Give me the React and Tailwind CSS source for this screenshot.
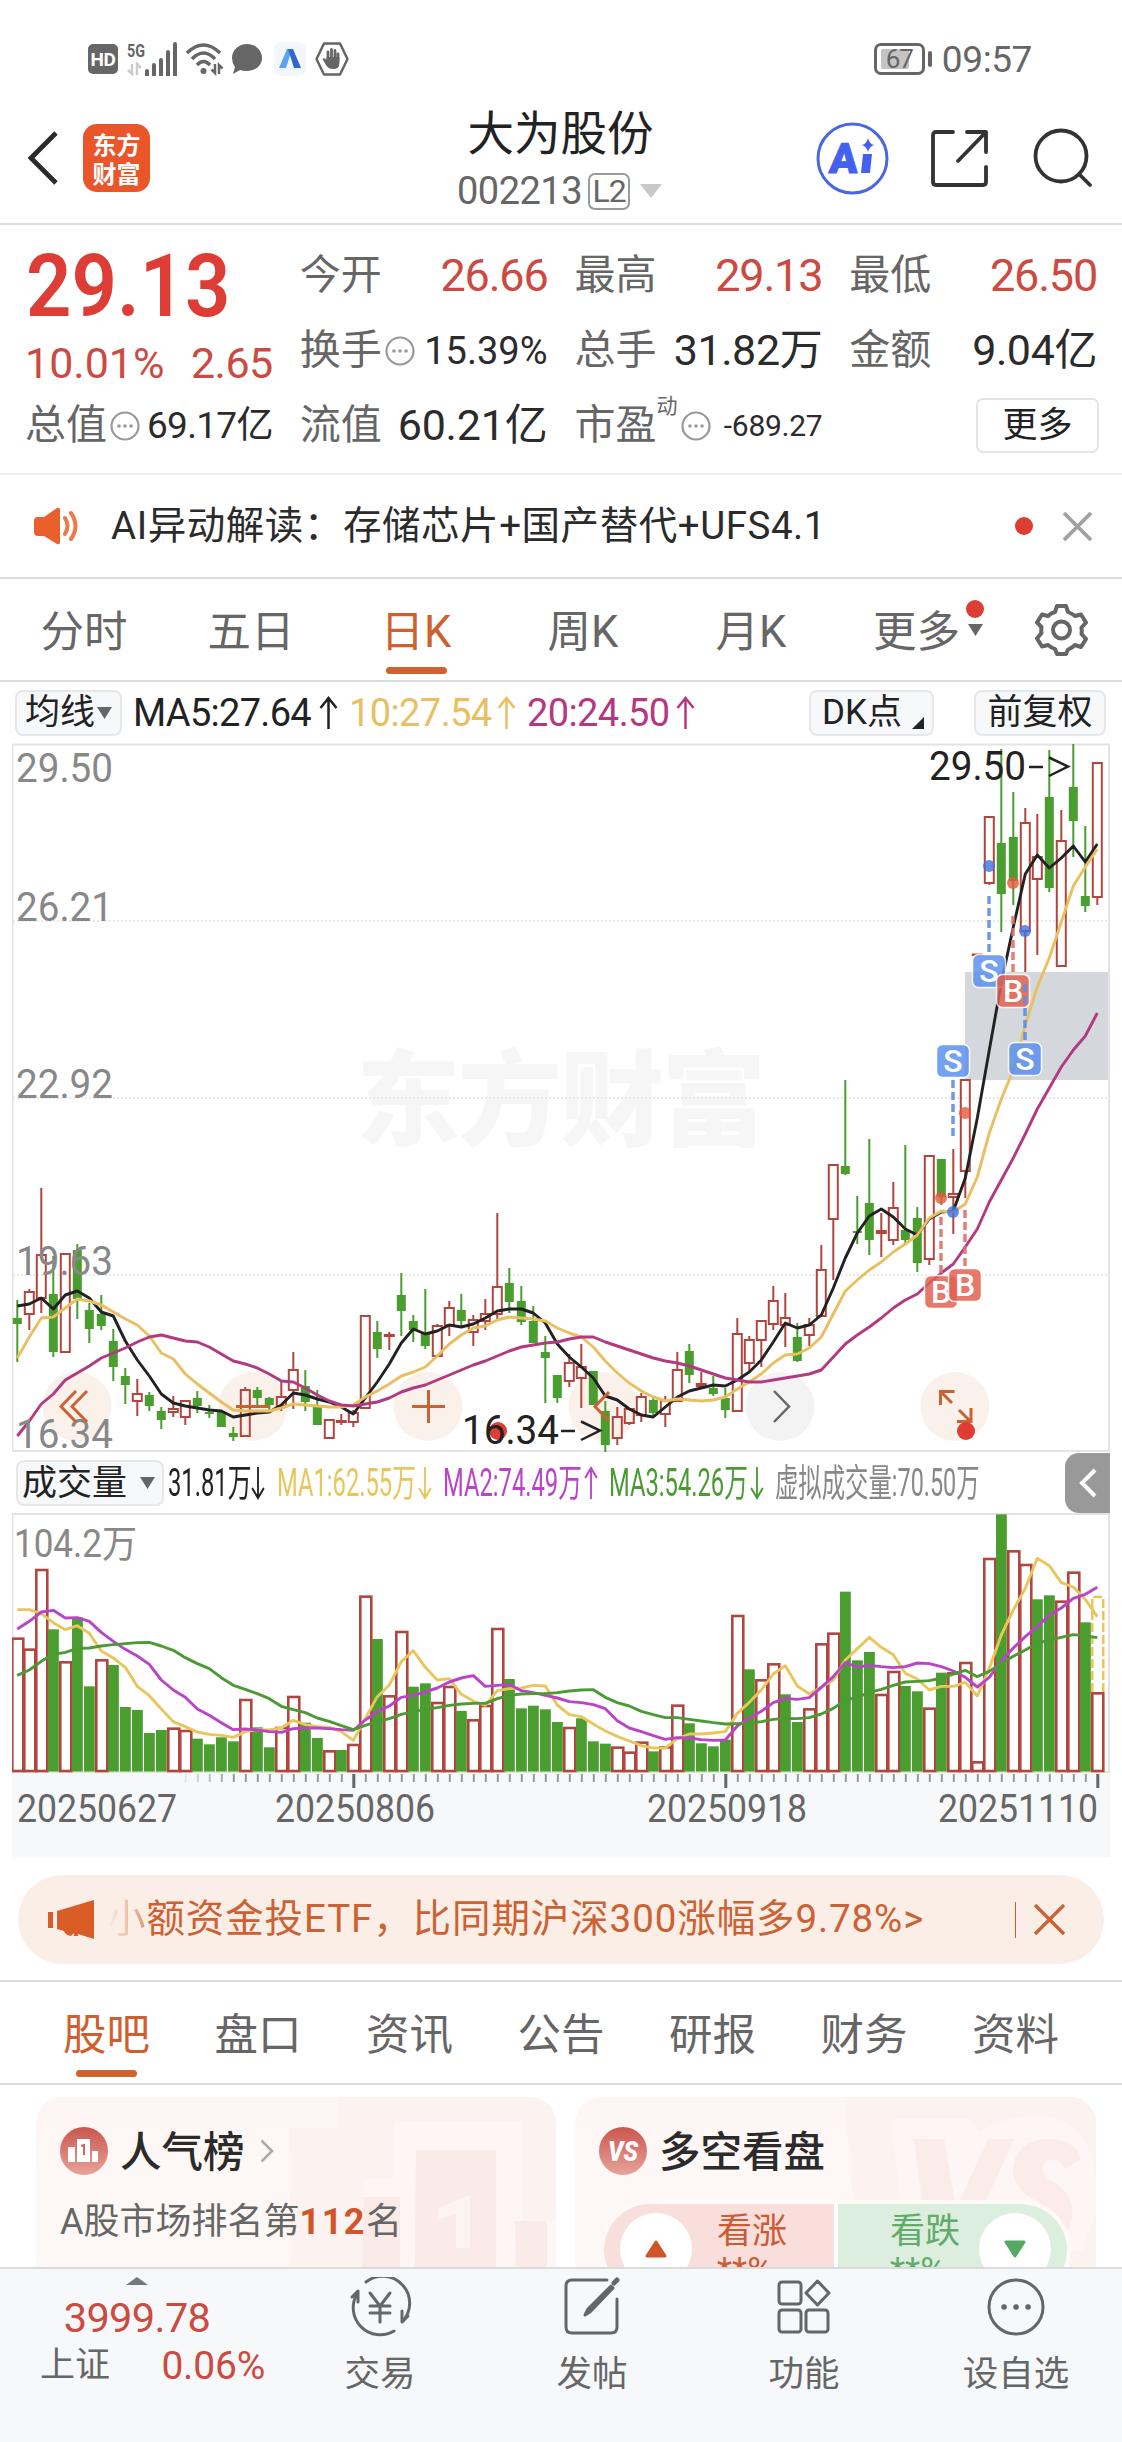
import React from 'react';
import clsx from 'clsx';

const RED = '#b1463f';
const GREEN = '#4a9e2f';
const STEP = 12;
const xAt = (i) => 17.3 + i * STEP;

// [color, high, body top, body bottom, low], all as y on the chart canvas
const candles = [
  ['g', 1300, 1318, 1324, 1362], ['r', 1289, 1292, 1314, 1330], ['r', 1188, 1255, 1298, 1313], ['g', 1256, 1294, 1352, 1357],
  ['r', 1254, 1254, 1352, 1352], ['g', 1244, 1250, 1299, 1319], ['g', 1303, 1310, 1329, 1343], ['g', 1295, 1314, 1326, 1330],
  ['g', 1329, 1341, 1367, 1381], ['g', 1368, 1376, 1385, 1404], ['r', 1379, 1394, 1401, 1416], ['g', 1392, 1395, 1406, 1411],
  ['g', 1407, 1411, 1420, 1429], ['r', 1396, 1409, 1412, 1417], ['r', 1401, 1401, 1417, 1425], ['g', 1391, 1398, 1406, 1413],
  ['g', 1405, 1412, 1414, 1418], ['g', 1412, 1412, 1427, 1427], ['g', 1427, 1433, 1437, 1441], ['r', 1387, 1390, 1436, 1437],
  ['g', 1387, 1390, 1398, 1408], ['g', 1397, 1398, 1405, 1410], ['r', 1382, 1397, 1406, 1411], ['r', 1352, 1370, 1390, 1409],
  ['g', 1370, 1386, 1402, 1411], ['g', 1390, 1407, 1425, 1425], ['r', 1420, 1420, 1438, 1439], ['r', 1414, 1421, 1422, 1425],
  ['r', 1410, 1413, 1422, 1427], ['r', 1316, 1316, 1408, 1408], ['g', 1321, 1332, 1349, 1358], ['r', 1332, 1335, 1336, 1350],
  ['g', 1273, 1295, 1311, 1336], ['g', 1315, 1321, 1330, 1342], ['g', 1289, 1333, 1346, 1349], ['r', 1324, 1326, 1356, 1356],
  ['r', 1301, 1308, 1325, 1336], ['g', 1294, 1310, 1321, 1327], ['r', 1315, 1320, 1332, 1346], ['r', 1299, 1314, 1321, 1330],
  ['r', 1213, 1287, 1314, 1320], ['g', 1268, 1283, 1302, 1313], ['g', 1286, 1301, 1322, 1325], ['g', 1306, 1321, 1343, 1343],
  ['g', 1336, 1352, 1358, 1403], ['g', 1375, 1375, 1398, 1403], ['r', 1354, 1363, 1381, 1387], ['r', 1344, 1367, 1378, 1408],
  ['g', 1371, 1371, 1405, 1405], ['g', 1401, 1411, 1445, 1452], ['r', 1407, 1417, 1438, 1445], ['r', 1409, 1409, 1423, 1425],
  ['r', 1393, 1397, 1415, 1422], ['g', 1398, 1400, 1413, 1417], ['r', 1396, 1401, 1414, 1427], ['r', 1352, 1370, 1401, 1401],
  ['g', 1344, 1351, 1375, 1383], ['r', 1372, 1384, 1386, 1388], ['g', 1376, 1388, 1394, 1396], ['g', 1388, 1398, 1410, 1418],
  ['r', 1318, 1334, 1411, 1411], ['r', 1336, 1340, 1363, 1371], ['r', 1321, 1321, 1340, 1367], ['r', 1286, 1301, 1324, 1330],
  ['r', 1293, 1318, 1325, 1347], ['g', 1323, 1337, 1361, 1362], ['r', 1318, 1325, 1335, 1346], ['r', 1245, 1270, 1316, 1316],
  ['r', 1165, 1165, 1219, 1280], ['g', 1080, 1166, 1174, 1175], ['g', 1196, 1231, 1233, 1244], ['g', 1139, 1203, 1240, 1255],
  ['r', 1213, 1231, 1233, 1257], ['r', 1182, 1208, 1240, 1245], ['g', 1145, 1230, 1240, 1244], ['g', 1207, 1218, 1263, 1272],
  ['r', 1156, 1156, 1259, 1265], ['g', 1159, 1159, 1197, 1205], ['r', 1149, 1194, 1197, 1234], ['r', 1080, 1080, 1171, 1198],
  ['r', 955, 954.5, 955, 955], ['r', 817, 817, 883, 885], ['g', 749, 843, 894, 932], ['g', 792, 837, 881, 905],
  ['r', 808, 823, 931, 972], ['r', 814, 857, 879, 955], ['g', 750, 797, 888, 892], ['r', 810, 841, 966, 966],
  ['g', 744, 787, 821, 857], ['g', 826, 896, 906, 912], ['r', 763, 763, 897, 905],
];

const ma5 = [
  1306, 1304, 1298, 1309, 1295, 1291, 1298, 1312, 1316, 1341, 1360, 1376, 1394, 1403, 1406, 1408, 1410, 1411, 1417, 1415,
  1413, 1412, 1405, 1393, 1395, 1399, 1402, 1407, 1414, 1398, 1382, 1364, 1343, 1329, 1334, 1331, 1325, 1327, 1324, 1318,
  1311, 1309, 1309, 1313, 1323, 1344, 1357, 1367, 1378, 1396, 1400, 1409, 1415, 1417, 1407, 1397, 1391, 1388, 1385, 1386,
  1380, 1372, 1360, 1342, 1323, 1328, 1325, 1315, 1288, 1258, 1233, 1216, 1209, 1217, 1229, 1235, 1219, 1212, 1211, 1178,
  1118, 1050, 983, 927, 874, 855, 868, 858, 846, 862, 844,
];

const ma10 = [
  1358, 1337, 1318, 1317, 1308, 1299, 1301, 1305, 1312, 1319, 1325, 1336, 1353, 1359, 1374, 1384, 1393, 1402, 1410, 1411,
  1411, 1411, 1408, 1404, 1405, 1406, 1407, 1407, 1405, 1397, 1391, 1384, 1376, 1372, 1367, 1356, 1344, 1335, 1328, 1326,
  1320, 1317, 1318, 1319, 1321, 1328, 1333, 1337, 1347, 1361, 1373, 1383, 1391, 1397, 1401, 1399, 1400, 1401, 1400, 1397,
  1389, 1382, 1374, 1363, 1355, 1354, 1348, 1337, 1314, 1291, 1280, 1270, 1262, 1252, 1244, 1235, 1218, 1211, 1212, 1204,
  1177, 1133, 1099, 1070, 1025, 987, 958, 922, 886, 867, 849,
];

const ma20 = [
  1436, 1421, 1404, 1394, 1380, 1373, 1366, 1358, 1353, 1348, 1342, 1337, 1335, 1338, 1341, 1342, 1347, 1354, 1361, 1364,
  1368, 1374, 1381, 1382, 1388, 1395, 1401, 1405, 1406, 1404, 1402, 1398, 1392, 1388, 1385, 1380, 1375, 1370, 1365, 1361,
  1356, 1351, 1347, 1345, 1343, 1342, 1339, 1337, 1337, 1342, 1346, 1350, 1354, 1358, 1361, 1363, 1366, 1370, 1374, 1378,
  1380, 1382, 1382, 1380, 1378, 1376, 1374, 1370, 1357, 1344, 1335, 1327, 1318, 1308, 1300, 1294, 1283, 1273, 1264, 1247,
  1229, 1202, 1180, 1158, 1134, 1109, 1088, 1067, 1050, 1036, 1013,
];

// Volume panel values are in thirds of a pixel below the panel top
const volY = (v) => 1450 + v / 3;

const volumes = [
  566, 599, 360, 538, 637, 502, 709, 631, 645, 771, 780, 849, 840, 836, 843, 866, 883, 862, 874, 750,
  832, 892, 834, 741, 818, 864, 904, 900, 885, 440, 567, 739, 546, 710, 700, 759, 711, 783, 811, 768,
  537, 687, 775, 767, 778, 816, 834, 805, 874, 881, 893, 908, 878, 904, 892, 767, 820, 880, 889, 869,
  498, 658, 691, 643, 733, 816, 778, 583, 551, 425, 631, 606, 735, 666, 708, 724, 776, 668, 670, 639,
  937, 327, 193, 304, 345, 448, 436, 455, 368, 517, 730,
];
const volumeColors =
  'rrrgrggrgg' + 'gggrrggggr' + 'ggrrggrgrr' + 'grrggrrgrr' + 'rgggggrggg' + 'rrrgrrgggg' + 'rgrrggrrrg' + 'ggrrggrgrr' + 'rrgrrggrrg' + 'r';

const volMa1 = [
  479, 479, 491, 518, 539, 527, 550, 603, 624, 652, 709, 737, 777, 815, 830, 846, 853, 856, 862, 845,
  839, 840, 834, 811, 824, 830, 832, 845, 871, 805, 740, 705, 635, 602, 652, 690, 686, 733, 753, 766,
  722, 716, 714, 706, 708, 765, 794, 800, 822, 843, 859, 873, 887, 894, 894, 866, 852, 852, 849, 845,
  790, 757, 720, 672, 647, 708, 732, 712, 690, 630, 596, 562, 592, 614, 670, 687, 720, 709, 709, 697,
  738, 655, 555, 480, 415, 325, 347, 398, 411, 448, 500,
];
const volMa2 = [
  537, 514, 486, 481, 504, 503, 514, 547, 574, 598, 618, 643, 690, 720, 742, 777, 796, 818, 839, 837,
  840, 845, 847, 836, 834, 834, 836, 839, 841, 810, 785, 768, 742, 736, 726, 714, 696, 684, 677, 709,
  706, 703, 722, 728, 736, 744, 755, 758, 764, 776, 812, 834, 845, 857, 868, 863, 864, 869, 871, 870,
  828, 805, 784, 758, 745, 748, 743, 712, 680, 638, 651, 646, 650, 653, 650, 639, 641, 650, 663, 682,
  711, 682, 633, 594, 560, 530, 495, 474, 445, 433, 412,
];
const volMa3 = [
  676, 660, 634, 613, 607, 595, 594, 588, 584, 581, 578, 577, 588, 601, 623, 641, 656, 683, 706, 718,
  731, 746, 769, 779, 788, 804, 814, 827, 839, 826, 815, 806, 793, 785, 778, 773, 766, 762, 760, 760,
  746, 736, 732, 731, 731, 728, 723, 720, 719, 742, 758, 768, 784, 794, 803, 803, 808, 813, 818, 822,
  821, 820, 815, 808, 805, 806, 803, 792, 775, 750, 742, 727, 718, 706, 696, 694, 692, 684, 672, 661,
  680, 664, 640, 619, 600, 580, 570, 562, 554, 558, 563,
];

const toPoints = (values, y = (v) => v) => values.map((v, i) => `${xAt(i)},${y(v)}`).join(' ');

const Line = ({ values, color, y }) => (
  <polyline points={toPoints(values, y)} fill="none" stroke={color} strokeWidth="2.9" strokeLinejoin="round" />
);

// ---------- Status bar ----------

const StatusBar = () => (
  <div className="flex h-[88px] shrink-0 items-center pt-[30px] pr-[90px] pl-[88px] text-[#666]">
    <div className="flex h-[30px] w-[30px] items-center justify-center rounded-[5px] bg-[#666] text-[19px] leading-none font-bold tracking-[-0.5px] text-white">
      HD
    </div>
    <svg className="ml-[9px]" width="51" height="34" viewBox="0 0 51 34">
      <text x="0" y="15" fontSize="18" fontWeight="700" textLength="18" lengthAdjust="spacingAndGlyphs" fill="#666">5G</text>
      <path d="M5 22v10l-4-4M10 33V22l4 4" fill="none" stroke="#ccc" strokeWidth="2.5" />
      <path d="M20 33v-4M27 33v-10M34 33v-15M41 33V10M48 33V2" stroke="#666" strokeWidth="4" strokeLinecap="round" />
    </svg>
    <svg className="ml-[8px]" width="38" height="34" viewBox="0 0 38 34">
      <g fill="none" stroke="#666" strokeWidth="3.5">
        <path d="M1 11Q17.500 -5 34 11" />
        <path d="M6 17Q17.500 5 29 17" />
        <path d="M11 23Q17.500 16 24 23" />
      </g>
      <circle cx="17.500" cy="29" r="3" fill="#666" />
      <path d="M29 22v9l-3.500-3.500M33 32v-9l3.500 3.500" fill="none" stroke="#666" strokeWidth="2.500" />
    </svg>
    <svg className="ml-[7px]" width="32" height="32" viewBox="0 0 32 32">
      <path d="M16 1C24 1 31 7 31 15S24 28 16 28Q12 28 9 27L2 31L4 24Q1 20 1 15C1 7 8 1 16 1Z" fill="#666" />
    </svg>
    <div className="ml-[11px] flex h-[34px] w-[32px] items-center justify-center rounded-[7px] bg-[#f2f7fe]">
      <svg width="24" height="20" viewBox="0 0 24 20">
        <path d="M9 0h5L8 19H1Z" fill="#5aa5ee" />
        <path d="M10 0h5l8 19h-7Z" fill="#2f66cf" />
      </svg>
    </div>
    <svg className="ml-[9px]" width="34" height="34" viewBox="0 0 34 34">
      <path d="M9 1.500h16L32.500 17L25 32.500H9L1.500 17Z" fill="none" stroke="#666" strokeWidth="2.500" strokeLinejoin="round" />
      <path d="M13 19V10M16.500 18V7.500M20 18V8.500M23 19v-7" stroke="#666" strokeWidth="2.800" strokeLinecap="round" />
      <path d="M11.600 15h12.800v6q0 6-6 6t-8-5l-3-5q2-2 4 1Z" fill="#666" />
    </svg>
    <div className="ml-auto flex items-center">
      <div className="relative flex h-[32px] w-[51px] items-center justify-center rounded-[7px] border-[3px] border-[#666] text-[26px] leading-none">
        <div className="absolute top-[3px] left-[4px] h-[20px] w-[28px] rounded-[2px] bg-[#c4c4c4]" />
        <span className="relative tracking-[-1px]">67</span>
      </div>
      <div className="ml-[3px] h-[16px] w-[4px] rounded bg-[#666]" />
      <span className="ml-[10px] text-[37px] leading-none tracking-[-0.4px]">09:57</span>
    </div>
  </div>
);

// ---------- Header ----------

const Header = () => (
  <div className="grid h-[137px] shrink-0 grid-cols-[1fr_auto_1fr] border-b-2 border-[#dcdcdc]">
    <div className="flex items-center pt-[5px] pl-[27px]">
      <svg width="31" height="54" viewBox="0 0 31 54">
        <path d="M29 2L4 27l25 25" fill="none" stroke="#2b2b2b" strokeWidth="4.800" />
      </svg>
      <div className="ml-[25px] flex h-[68px] w-[67px] flex-col items-center justify-center rounded-[14px] bg-[#ea5529] font-['Noto_Sans_CJK_SC',sans-serif] text-[24px] leading-[29px] font-bold text-white">
        <span>东方</span>
        <span>财富</span>
      </div>
    </div>
    <div className="flex flex-col items-center pt-[23px]">
      <h1 className="-ml-[1px] text-[46.500px] leading-[46px] text-[#222]">大为股份</h1>
      <div className="mt-[15px] -ml-[3px] flex h-[38px] items-center text-[#666]">
        <span className="text-[38px] leading-none tracking-[-0.500px]">002213</span>
        <span className="ml-[6px] flex h-[37px] w-[42px] items-center justify-center rounded-[7px] border-2 border-[#999] text-[32px] leading-none tracking-[-1px]">
          L2
        </span>
        <svg className="ml-[10px]" width="22" height="14" viewBox="0 0 22 14">
          <path d="M0 0h22L11 14Z" fill="#c8c8c8" />
        </svg>
      </div>
    </div>
    <div className="flex items-center justify-end pt-[5px] pr-[29px]">
      <svg width="73" height="73" viewBox="0 0 73 73">
        <circle cx="36.500" cy="36.500" r="34.500" fill="#fff" stroke="#4a67e2" strokeWidth="3" />
        <text x="13" y="51" fontSize="42" fontWeight="900" fill="#4361ee" stroke="#4361ee" strokeWidth="1" transform="skewX(-4) translate(3 0)">A</text>
        <path d="M47 32h9l-2 19h-9Z" fill="#4361ee" />
        <path d="M52 16q1.500 6 6 7q-4.500 1.500-6 7q-1.500-5.500-6-7q4.500-1 6-7Z" fill="#4361ee" />
      </svg>
      <svg className="ml-[41px]" width="59" height="59" viewBox="0 0 59 59">
        <g fill="none" stroke="#333" strokeWidth="3.800" strokeLinecap="round" strokeLinejoin="round">
          <path d="M23 3H6q-3 0-3 3v47q0 3 3 3h47q3 0 3-3V38" />
          <path d="M37 3h19v20M56 3L28 32" />
        </g>
      </svg>
      <svg className="ml-[44px]" width="60" height="60" viewBox="0 0 60 60">
        <circle cx="28" cy="28" r="25.500" fill="none" stroke="#333" strokeWidth="3.800" />
        <path d="M46 46l11 11" stroke="#333" strokeWidth="3.800" strokeLinecap="round" />
      </svg>
    </div>
  </div>
);

// ---------- Quote ----------

const InfoDots = () => (
  <svg className="ml-[3px] shrink-0" width="30" height="30" viewBox="0 0 30 30">
    <circle cx="15" cy="15" r="13.500" fill="none" stroke="#999" strokeWidth="2.200" />
    <circle cx="9" cy="15" r="1.800" fill="#999" />
    <circle cx="15" cy="15" r="1.800" fill="#999" />
    <circle cx="21" cy="15" r="1.800" fill="#999" />
  </svg>
);

const Quote = ({ label, value, info, sup, valueClass }) => (
  <div className="flex h-[75px] items-center whitespace-nowrap">
    <span className="text-[41px] leading-none text-[#666]">{label}</span>
    {sup && <span className="self-start pt-[8px] text-[21px] leading-none text-[#666]">{sup}</span>}
    {info && <InfoDots />}
    <span className={clsx('ml-auto leading-none', valueClass)}>{value}</span>
  </div>
);

const QuotePanel = () => (
  <div className="grid h-[250px] shrink-0 grid-cols-4 content-start gap-x-[27px] border-b-2 border-[#eee] pt-[13px] pr-[25px] pl-[25px]">
    <div className="row-span-2 h-[150px] text-[#cb4a41]">
      <div className="ml-[1px] w-max origin-left scale-x-[0.905] pt-[4px] text-[88px] leading-[88px] font-semibold text-[#dd3d35]">29.13</div>
      <div className="mt-[12px] flex justify-between text-[43px] leading-[43px]">
        <span className="tracking-[0px]">10.01%</span>
        <span className="tracking-[-0.500px]">2.65</span>
      </div>
    </div>
    <Quote label="今开" value="26.66" valueClass="text-[45px] tracking-[-1.200px] text-[#cb4a41]" />
    <Quote label="最高" value="29.13" valueClass="text-[45px] tracking-[-1.200px] text-[#cb4a41]" />
    <Quote label="最低" value="26.50" valueClass="text-[45px] tracking-[-1.200px] text-[#cb4a41]" />
    <Quote label="换手" value="15.39%" info valueClass="text-[38px] tracking-[0px] text-[#2b2b2b]" />
    <Quote label="总手" value="31.82万" valueClass="text-[43px] tracking-[-0.400px] text-[#2b2b2b]" />
    <Quote label="金额" value="9.04亿" valueClass="text-[43px] tracking-[-0.400px] text-[#2b2b2b]" />
    <Quote label="总值" value="69.17亿" info valueClass="text-[37px] tracking-[-0.700px] text-[#2b2b2b]" />
    <Quote label="流值" value="60.21亿" valueClass="text-[43px] tracking-[-0.200px] text-[#2b2b2b]" />
    <Quote label="市盈" sup="动" value="-689.27" info valueClass="text-[30px] tracking-[-0.300px] text-[#2b2b2b]" />
    <div className="flex h-[75px] items-center justify-end">
      <button className="-mr-[2px] h-[55px] w-[123px] rounded-[7px] border-2 border-[#e4e4e4] text-[35px] leading-none text-[#222]">更多</button>
    </div>
  </div>
);

const AiNotice = () => (
  <div className="flex h-[104px] shrink-0 items-center border-b-2 border-[#dcdcdc] pr-[29px] pl-[34px]">
    <svg width="46" height="38" viewBox="0 0 46 38">
      <path d="M4 10h6L23 1q3-1 3 2v32q0 3-3 2L10 29H4q-4 0-4-4V14q0-4 4-4Z" fill="#e9602c" />
      <path d="M31 11q5 8 0 16M37 6q9 13 0 26" fill="none" stroke="#ec7a4c" strokeWidth="4" strokeLinecap="round" />
    </svg>
    <span className="ml-[31px] text-[38.500px] leading-none tracking-[0.550px] text-[#2b2b2b]">AI异动解读：存储芯片+国产替代+UFS4.1</span>
    <div className="ml-auto h-[18px] w-[18px] rounded-full bg-[#dd3d35]" />
    <svg className="ml-[29px]" width="31" height="31" viewBox="0 0 31 31">
      <path d="M2 2l27 27M29 2L2 29" stroke="#a0a0a0" strokeWidth="3.800" />
    </svg>
  </div>
);

const periods = ['分时', '五日', '日K', '周K', '月K'];
const periodWidths = ['w-[86px] mr-[81px]', 'w-[86px] mr-[90px]', 'w-[64px] mr-[100px]', 'w-[70px] mr-[98px]', 'w-[70px]'];

const PeriodTabs = () => (
  <div className="flex h-[103px] shrink-0 items-center border-b-2 border-[#dcdcdc] pr-[34px] pl-[41px] text-[43.500px] leading-none whitespace-nowrap text-[#666]">
    {periods.map((name, i) => (
      <div key={name} className={clsx('flex h-full flex-col items-center pt-[32px]', periodWidths[i], name === '日K' && 'text-[#cf5f2e]')}>
        <span>{name}</span>
        {name === '日K' && <div className="mt-[12px] h-[7px] w-[61px] shrink-0 rounded-full bg-[#d0622f]" />}
      </div>
    ))}
    <div className="ml-auto flex h-full items-start pt-[21px]">
      <span className="pt-[11px]">更多</span>
      <div className="ml-[6px] flex flex-col items-center">
        <div className="h-[18px] w-[18px] rounded-full bg-[#dd3d35]" />
        <svg className="mt-[6px]" width="15" height="12" viewBox="0 0 15 12">
          <path d="M0 0h15L7.500 12Z" fill="#666" />
        </svg>
      </div>
    </div>
    <svg className="ml-[51px]" width="53" height="53" viewBox="0 0 53 53">
      <g fill="none" stroke="#666" strokeWidth="4" strokeLinejoin="round">
        <path d="M22 3h9l2 6q4 1.500 7 4l6-1.500l5 8l-4.500 5q.500 4 0 6.500l4.500 5l-5 8L40 42q-3 3-7 4.500L31 51h-9l-2-5q-4-1.500-7-4l-6 1.500l-5-8L6.500 30q-.500-3 0-6L2 19.500l5-8L13 13q3-3 7-4Z" />
        <circle cx="26.500" cy="27" r="8.500" />
      </g>
    </svg>
  </div>
);

// ---------- Price chart ----------

const Arrow = ({ down, className }) => (
  <svg className={className} width="19" height="34" viewBox="0 0 19 34" preserveAspectRatio="none">
    <path
      d={down ? 'M9.500 1v31M1.500 22l8 10l8-10' : 'M9.500 33V2M1.500 12l8-10l8 10'}
      fill="none"
      stroke="currentColor"
      strokeWidth="2.500"
    />
  </svg>
);

const chipClass = 'flex h-[46px] items-center rounded-[8px] border-2 border-[#e6e7ea] bg-[#f7f8fa] text-[35px] leading-none text-[#222]';

const MaLegend = () => (
  <div className="flex h-[61px] shrink-0 items-center pr-[16px] pl-[15px] text-[38px] leading-none whitespace-nowrap text-[#222]">
    <div className={clsx(chipClass, 'w-[107px] pl-[8px]')}>
      均线
      <svg className="ml-[2px]" width="15" height="12" viewBox="0 0 15 12">
        <path d="M0 0h15L7.500 12Z" fill="#666" />
      </svg>
    </div>
    <span className="ml-[11px] w-[184px] tracking-[-0.700px]">MA5:27.64</span>
    <Arrow className="ml-[2px]" />
    <span className="ml-[11px] w-[146px] tracking-[-0.600px] text-[#e9bf62]">10:27.54</span>
    <Arrow className="ml-[2px] text-[#e9bf62]" />
    <span className="ml-[11px] w-[147px] tracking-[-0.600px] text-[#b63680]">20:24.50</span>
    <Arrow className="ml-[2px] text-[#b63680]" />
    <div className={clsx(chipClass, 'ml-auto w-[125px] pl-[11px]')}>
      DK点
      <svg className="mt-[20px] ml-[10px]" width="12" height="12" viewBox="0 0 12 12">
        <path d="M12 0v12H0Z" fill="#222" />
      </svg>
    </div>
    <div className={clsx(chipClass, 'ml-[40px] w-[132px] justify-center')}>前复权</div>
  </div>
);

const Candle = ({ index, data }) => {
  const [color, high, top, bottom, low] = data;
  const x = xAt(index);
  if (color === 'g') {
    return (
      <g fill={GREEN}>
        <rect x={x - 1} y={high} width="2" height={low - high} />
        <rect x={x - 4.5} y={top} width="9" height={Math.max(bottom - top, 2)} />
      </g>
    );
  }
  return (
    <g stroke={RED} strokeWidth="2">
      <path d={`M${x} ${high}V${top}M${x} ${bottom}V${low}`} />
      <rect x={x - 4.5} y={top} width="9" height={bottom - top} fill="none" />
    </g>
  );
};

const markers = [
  { type: 'S', x: 953, y: 1061, dot: 1212, from: 1080, to: 1138 },
  { type: 'S', x: 989, y: 971, dot: 866, from: 896, to: 954 },
  { type: 'B', x: 1013, y: 991, dot: 883, from: 916, to: 974 },
  { type: 'S', x: 1025, y: 1059, dot: 931, from: 984, to: 1042 },
  { type: 'B', x: 941, y: 1292, dot: 1198, from: 1217, to: 1275 },
  { type: 'B', x: 965, y: 1285, dot: 1113, from: 1210, to: 1268 },
];

const Marker = ({ type, x, y, dot, from, to }) => {
  const sell = type === 'S';
  return (
    <g>
      <path d={`M${x} ${from}V${to}`} stroke={sell ? '#5b8fea' : '#df7266'} strokeWidth="3.5" strokeDasharray="8 4" opacity="0.9" />
      <circle cx={x} cy={dot} r="6" fill={sell ? '#3f72e0' : '#e4573f'} opacity="0.8" />
      <rect x={x - 16.5} y={y - 16.5} width="33" height="33" rx="6" fill={sell ? '#5a90f0' : '#e2604f'} stroke="#fff" strokeWidth="1.500" opacity="0.84" />
      <text x={x} y={y + 11} fontSize="32" fontWeight="500" textAnchor="middle" fill="#fff">{type}</text>
    </g>
  );
};

const axisLabels = [['29.50', 782], ['26.21', 921], ['22.92', 1098], ['19.63', 1275], ['16.34', 1448]];

const PriceChart = () => (
  <svg className="ml-[12px] block shrink-0" width="1098" height="710" viewBox="12 743 1098 710">
    <text x="356" y="1138" fontSize="104" fontWeight="900" textLength="410" fill="#f6f6f6">东方财富</text>
    <rect x="965" y="972" width="144" height="108" fill="#d4d7db" />
    {[921, 1098, 1275].map((y) => (
      <path key={y} d={`M13 ${y}H1109`} stroke="#e2e2e2" strokeWidth="1.500" strokeDasharray="2 2" />
    ))}
    <path d="M12 744.500H1109V1451H12.500V744" fill="none" stroke="#e3e3e3" strokeWidth="2" />
    {[77, 253, 428, 603, 955].map((cx) => (
      <circle key={cx} cx={cx} cy="1406.500" r="34.500" fill="#fbf1eb" />
    ))}
    <circle cx="780" cy="1406.500" r="34.500" fill="#f3f3f3" />
    {candles.map((data, i) => (
      <Candle key={i} index={i} data={data} />
    ))}
    <Line values={ma5} color="#222" />
    <Line values={ma10} color="#e9bf62" />
    <Line values={ma20} color="#b13a80" />
    {markers.map((m) => (
      <Marker key={`${m.x}`} {...m} />
    ))}
    {axisLabels.map(([label, y]) => (
      <text key={label} x="16" y={y} fontSize="40" fill="#888" textLength="97" lengthAdjust="spacingAndGlyphs">{label}</text>
    ))}
    <g fill="none" stroke="#cc6233" strokeWidth="3">
      <path d="M76 1391l-15 15.500l15 15.500M87 1391l-15 15.500l15 15.500" />
      <path d="M236 1406.500h33" />
      <path d="M412 1406.500h33M428.500 1390v33" />
      <path d="M609 1392l-14 14.500l14 14.500" />
      <path d="M940.500 1405v-13.500h14M941 1392l11 11M971 1408v13.500h-14M970 1421l-11-11" />
    </g>
    <path d="M774 1391l15 15.500l-15 15.500" fill="none" stroke="#666" strokeWidth="2.500" />
    <circle cx="498" cy="1431" r="9" fill="#dd3d35" />
    <circle cx="966" cy="1431" r="9" fill="#dd3d35" />
    <text x="462" y="1444" fontSize="40" fill="#222" textLength="97" lengthAdjust="spacingAndGlyphs">16.34</text>
    <path d="M561 1431h14M581 1421.500l19 9l-19 9.500" fill="none" stroke="#222" strokeWidth="2.500" />
    <text x="929" y="780" fontSize="40" fill="#222" textLength="97" lengthAdjust="spacingAndGlyphs">29.50</text>
    <path d="M1029 767h14M1049 757.500l19 9l-19 9.500" fill="none" stroke="#222" strokeWidth="2.500" />
  </svg>
);

// ---------- Volume chart ----------

const volumeLegend = [
  { text: '31.81万', down: true, box: 'w-[83px] text-[#222]', gap: 'mr-[10px]' },
  { text: 'MA1:62.55万', down: true, box: 'w-[141px] text-[#e8c65c]', gap: 'mr-[9px]' },
  { text: 'MA2:74.49万', down: false, box: 'w-[141px] text-[#b944c8]', gap: 'mr-[9px]' },
  { text: 'MA3:54.26万', down: true, box: 'w-[141px] text-[#4b9a35]', gap: 'mr-[9px]' },
];

const VolumeLegend = () => (
  <div className="flex h-[60px] shrink-0 items-center pl-[16px] text-[38px] leading-none whitespace-nowrap">
    <div className={clsx(chipClass, 'w-[148px] pl-[4px]')}>
      成交量
      <svg className="ml-[13px]" width="15" height="12" viewBox="0 0 15 12">
        <path d="M0 0h15L7.500 12Z" fill="#666" />
      </svg>
    </div>
    <div className="ml-[4px] flex items-center">
      {volumeLegend.map((item) => (
        <div key={item.text} className={clsx('flex items-center', item.box, item.gap, 'box-content pr-[16px]')}>
          <span className="w-full">
            <span className="block w-max origin-left scale-x-[0.625]">{item.text}</span>
          </span>
          <Arrow down={item.down} className="-mr-[16px] w-[14px] shrink-0" />
        </div>
      ))}
      <span className="w-[202px] text-[#888]">
        <span className="block w-max origin-left scale-x-[0.615]">虚拟成交量:70.50万</span>
      </span>
    </div>
    <div className="mr-[12px] ml-auto flex h-[60px] w-[45px] items-center justify-center rounded-l-[14px] bg-[#999]">
      <svg width="18" height="30" viewBox="0 0 18 30">
        <path d="M16 2L3 15l13 13" fill="none" stroke="#fff" strokeWidth="4" />
      </svg>
    </div>
  </div>
);

const dates = [['20250627', 17], ['20250806', 275], ['20250918', 647], ['20251110', 938]];
const majorTicks = [28, 59, 90];

const VolumeChart = () => (
  <svg className="ml-[12px] block shrink-0" width="1098" height="344" viewBox="12 1513 1098 344">
    <rect x="12" y="1772" width="1098" height="85" fill="#f7f8fa" />
    <path d="M12 1514H1109V1772H12.500V1514" fill="none" stroke="#e3e3e3" strokeWidth="2" />
    {volumes.map((v, i) => {
      const x = xAt(i);
      const y = volY(v);
      return volumeColors[i] === 'g' ? (
        <rect key={i} x={x - 5.3} y={y} width="10.800" height={1771.5 - y} fill={GREEN} />
      ) : (
        <rect key={i} x={x - 5} y={y} width="11" height={1771 - y} fill="#fff" stroke={RED} strokeWidth="2.600" />
      );
    })}
    <path d="M1092.300 1692V1597h11V1692" fill="none" stroke="#e8c65c" strokeWidth="2.500" strokeDasharray="9 3" />
    <Line values={volMa1} color="#e8c65c" y={volY} />
    <Line values={volMa2} color="#b944c8" y={volY} />
    <Line values={volMa3} color="#4b9a35" y={volY} />
    {candles.map((_, i) => {
      if (i < 14) return null;
      const major = majorTicks.includes(i);
      return (
        <path
          key={i}
          d={`M${xAt(i) + 0.5} 1774V${major ? 1788 : 1782}`}
          stroke={major ? '#666' : '#999'}
          strokeWidth={major ? 3 : 2}
          opacity={Math.min(1, 0.2 + (i - 14) * 0.2)}
        />
      );
    })}
    <text x="14" y="1557" fontSize="38" fill="#888" textLength="123" lengthAdjust="spacingAndGlyphs">104.2万</text>
    {dates.map(([label, x]) => (
      <text key={label} x={x} y="1822" fontSize="38" fill="#666" textLength="160" lengthAdjust="spacingAndGlyphs">{label}</text>
    ))}
  </svg>
);

// ---------- Promo and lower tabs ----------

const Promo = () => (
  <div className="mx-[18px] mt-[18px] flex h-[89px] shrink-0 items-center rounded-full bg-[#fbeee6] pr-[38px] pl-[30px] text-[#cc6233]">
    <svg width="46" height="40" viewBox="0 0 46 40">
      <path d="M0 12h5v16H0ZM9 11L46 0v39L30 34v2h-4v-3l-3 3q-6-1-7-5l-7-2Z" fill="#da5c26" />
    </svg>
    <span className="ml-[13px] text-[38.500px] leading-none tracking-[0.900px] whitespace-nowrap">
      <span className="bg-gradient-to-r from-[#fbeee6] to-[#dd9a78] bg-clip-text text-transparent">小</span>
      额资金投ETF，比同期沪深300涨幅多9.78%&gt;
    </span>
    <div className="ml-auto h-[36px] w-px bg-[#cc6233]" />
    <svg className="ml-[17px]" width="33" height="33" viewBox="0 0 33 33">
      <path d="M2 2l29 29M31 2L2 31" stroke="#cc6233" strokeWidth="3.300" />
    </svg>
  </div>
);

const sections = ['股吧', '盘口', '资讯', '公告', '研报', '财务', '资料'];

const SectionTabs = () => (
  <div className="mt-[16px] flex h-[105px] shrink-0 justify-between border-y-2 border-[#dcdcdc] px-[63px] text-[43.500px] leading-none text-[#666]">
    {sections.map((name, i) => (
      <div key={name} className={clsx('flex flex-col items-center pt-[32px]', i === 0 && 'text-[#cf5f2e]')}>
        <span>{name}</span>
        {i === 0 && <div className="mt-[12px] h-[7px] w-[61px] shrink-0 rounded-full bg-[#d0622f]" />}
      </div>
    ))}
  </div>
);

const RankCard = () => (
  <div className="relative h-[240px] w-[520px] overflow-hidden rounded-[26px] bg-gradient-to-b from-[#fdf6f4] to-[#fefaf8] px-[24px] pt-[30px]">
    <svg className="absolute top-0 right-0" width="267" height="240" viewBox="0 0 267 240">
      <path d="M49 0h218v240H0V31h49Z" fill="#fcf3f1" />
      <path d="M104 24h130v100h33v116H75V82h29Z" fill="#fdf6f4" />
      <path d="M127 53h80v187h-82ZM75 100h36v140H72ZM226 124h32v116h-30Z" fill="#fbebe8" />
      <path d="M149 111l32-13v53h-14v-34l-18 6Z" fill="#fdf4f2" />
    </svg>
    <div className="relative flex h-[48px] items-center">
      <svg width="48" height="48" viewBox="0 0 48 48">
        <defs>
          <linearGradient id="badge" x1="0" y1="0" x2="0" y2="1">
            <stop offset="0" stopColor="#c9564d" />
            <stop offset="1" stopColor="#e8a39b" />
          </linearGradient>
        </defs>
        <circle cx="24" cy="24" r="24" fill="url(#badge)" />
        <path d="M8 20h7v15H8ZM17 12h13v23H17ZM32 24h6v11h-6Z" fill="#fff" />
        <path d="M21 19l3-1v10" fill="none" stroke="#cf675f" strokeWidth="2" />
      </svg>
      <span className="mt-[3px] ml-[12px] text-[41.500px] leading-none font-medium text-[#2b2b2b]">人气榜</span>
      <svg className="ml-[15px]" width="14" height="24" viewBox="0 0 14 24">
        <path d="M1.500 1.500L12 12L1.500 22.500" fill="none" stroke="#aaa" strokeWidth="2.500" />
      </svg>
    </div>
    <div className="relative mt-[29px] text-[36px] leading-none whitespace-nowrap text-[#666]">
      A股市场排名第<b className="tracking-[1.500px] text-[#d2552a]">112</b>名
    </div>
  </div>
);

const Vote = ({ up }) => (
  <div className={clsx('flex h-[92px] flex-1 pt-[9px]', up ? 'rounded-l-full bg-[#f8dfdb] pl-[16px] text-[#cc5a35]' : 'flex-row-reverse rounded-r-full bg-[#dceedd] pr-[16px] text-[#62ab6b]')}>
    <div className="flex h-[72px] w-[72px] items-center justify-center rounded-full bg-white">
      <svg width="24" height="18" viewBox="0 0 24 18">
        {up ? <path d="M12 2l9 14H3Z" fill="#d2552a" stroke="#d2552a" strokeWidth="3" strokeLinejoin="round" /> : <path d="M12 16L3 2h18Z" fill="#57a864" stroke="#57a864" strokeWidth="3" strokeLinejoin="round" />}
      </svg>
    </div>
    <div className={clsx('flex flex-col pt-[1px] text-[35px] leading-[35px]', up ? 'ml-[25px]' : 'mr-[19px]')}>
      <span>{up ? '看涨' : '看跌'}</span>
      <span className="mt-[4px] leading-[36px]">**%</span>
    </div>
  </div>
);

const VoteCard = () => (
  <div className="relative h-[240px] w-[521px] overflow-hidden rounded-[26px] bg-gradient-to-b from-[#fdf6f4] to-[#fefaf8] px-[24px] pt-[30px]">
    <svg className="absolute top-0 right-0" width="260" height="240" viewBox="0 0 260 240">
      <path d="M8 0h252v240H30Z" fill="#fcf2f0" />
      <path d="M55 22h80l8 12q60-30 100 0q22 30 17 80l-14 40H70Z" fill="#fdf6f4" />
      <path d="M78 42h30l12 70l32-70h26l-50 110H92Z" fill="#fbecea" />
      <path d="M245 62q-6-20-34-20q-34 2-34 34q2 18 24 28q16 10 6 22q-12 8-24-6l-10 22q20 16 44 6q24-14 18-42q-4-14-22-24q-12-10-2-18q12-4 18 8Z" fill="#fbecea" />
    </svg>
    <div className="relative flex h-[48px] items-center">
      <svg width="48" height="48" viewBox="0 0 48 48">
        <circle cx="24" cy="24" r="24" fill="url(#badge)" />
        <text x="24" y="34" fontSize="28" fontWeight="900" fontStyle="italic" textAnchor="middle" textLength="30" lengthAdjust="spacingAndGlyphs" fill="#fff">VS</text>
      </svg>
      <span className="mt-[4px] ml-[12px] text-[41.500px] leading-none font-medium text-[#2b2b2b]">多空看盘</span>
    </div>
    <div className="relative mt-[25px] ml-[1px] flex w-[471px] gap-[4px] rounded-full border-4 border-[#fffaf8] bg-white">
      <Vote up />
      <Vote />
    </div>
  </div>
);

// ---------- Bottom bar ----------

const actions = [
  {
    name: '交易',
    icon: (
      <>
        <path d="M18 5A27 27 0 0 1 55 44M46 54A27 27 0 0 1 9 17" />
        <path d="M4 20l6-6V25M60 39l-6 6V34" />
        <path d="M22 16l10 13l10-13M32 29v16M22 29h20M22 36h20" />
      </>
    ),
  },
  {
    name: '发帖',
    icon: (
      <>
        <path d="M47 3H12q-6 0-6 6v41q0 6 6 6h39q6 0 6-6V22" />
        <path d="M25 38l3-6L51 9l2 2L30 35Z" fill="#666" />
        <path d="M54 6l3-3" strokeWidth="5" />
      </>
    ),
  },
  {
    name: '功能',
    icon: (
      <>
        <rect x="7" y="5" width="22" height="22" rx="3" />
        <rect x="7" y="33" width="22" height="22" rx="3" />
        <rect x="34" y="33" width="22" height="22" rx="3" />
        <path d="M45.500 4L57 16L45.500 28L34 16Z" />
      </>
    ),
  },
  {
    name: '设自选',
    icon: (
      <>
        <circle cx="32" cy="30" r="27" />
        <path d="M20 30h.100M32 30h.100M44 30h.100" strokeWidth="5.500" />
      </>
    ),
  },
];

const BottomBar = () => (
  <div className="flex h-[175px] shrink-0 border-t-2 border-[#dadbdd] bg-[#f7f8fa]">
    <div className="flex w-[274px] flex-col items-center pt-[8px] text-[#cb4a41]">
      <svg width="22" height="8" viewBox="0 0 22 8">
        <path d="M11 0l11 8H0Z" fill="#777" />
      </svg>
      <span className="mt-[12px] text-[41.500px] leading-[41px] tracking-[-0.600px]">3999.78</span>
      <div className="mt-[9px] flex w-full justify-between pr-[9px] pl-[40px] leading-[38px]">
        <span className="text-[35px] text-[#666]">上证</span>
        <span className="text-[39px] tracking-[-0.200px]">0.06%</span>
      </div>
    </div>
    {actions.map(({ name, icon }) => (
      <div key={name} className="flex w-[212px] flex-col items-center pt-[8px]">
        <svg width="64" height="60" viewBox="0 0 64 60" fill="none" stroke="#666" strokeWidth="3" strokeLinecap="round" strokeLinejoin="round">
          {icon}
        </svg>
        <span className="mt-[20px] text-[35.500px] leading-[35px] text-[#666]">{name}</span>
      </div>
    ))}
  </div>
);

export default function App() {
  return (
    <div className="flex h-[2442px] w-[1122px] flex-col overflow-hidden bg-white font-['Roboto','Noto_Sans_CJK_SC',sans-serif]">
      <StatusBar />
      <Header />
      <QuotePanel />
      <AiNotice />
      <PeriodTabs />
      <MaLegend />
      <PriceChart />
      <VolumeLegend />
      <VolumeChart />
      <Promo />
      <SectionTabs />
      <div className="flex min-h-0 flex-1 gap-[19px] overflow-hidden pt-[12px] pl-[36px]">
        <RankCard />
        <VoteCard />
      </div>
      <BottomBar />
    </div>
  );
}
